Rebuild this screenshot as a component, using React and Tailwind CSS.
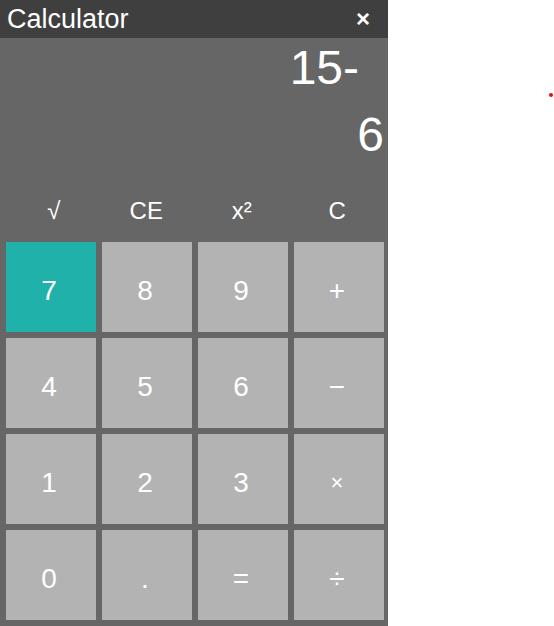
export default function App() {
  const keys = [
    ["7", "", true], ["8"], ["9"], ["+"],
    ["4"], ["5"], ["6"], ["\u2212"],
    ["1"], ["2"], ["3"], ["\u00d7", "text-[22px]"],
    ["0"], ["."], ["="], ["\u00f7"],
  ];
  return (
    <div className="relative w-[554px] h-[626px] bg-white" style={{ fontFamily: '"Liberation Sans", Arial, sans-serif' }}>
      <div className="w-[388px] h-[626px] bg-[#666666] flex flex-col">
        <div className="h-[38px] bg-[#3f3f3f] flex items-center justify-between text-white">
          <span className="pl-[7px] text-[27px] leading-none">Calculator</span>
          <span className="mr-[18px] text-[24px] font-bold leading-none">×</span>
        </div>
        <div className="h-[198px] flex flex-col text-white">
          <div className="pt-[6px] text-right text-[48px] leading-[48px] pr-[29px]">15-</div>
          <div className="mt-[19px] text-right text-[48px] leading-[48px] pr-[4px]">6</div>
          <div className="mt-auto h-[51px] grid grid-cols-4 gap-[6px] px-[6px] text-[24px]">
            <div className="flex items-center justify-center pl-[6px]">√</div>
            <div className="flex items-center justify-center">CE</div>
            <div className="flex items-center justify-center">x²</div>
            <div className="flex items-center justify-center">C</div>
          </div>
        </div>
        <div className="grid grid-cols-4 gap-[6px] p-[6px] pr-[4px] w-[388px]">
          {keys.map(([k, size, teal]) => (
            <div
              key={k}
              className={`h-[90px] w-[90px] flex items-center justify-center pt-[8px] pr-[4px] text-white leading-none ${size || "text-[28px]"} ${teal ? "bg-[#20b2aa]" : "bg-[#b3b3b3]"}`}
            >
              {k}
            </div>
          ))}
        </div>
      </div>
      <div className="absolute left-[549px] top-[93px] w-[4px] h-[4px] rounded-full bg-[#e01010]" />
    </div>
  );
}
